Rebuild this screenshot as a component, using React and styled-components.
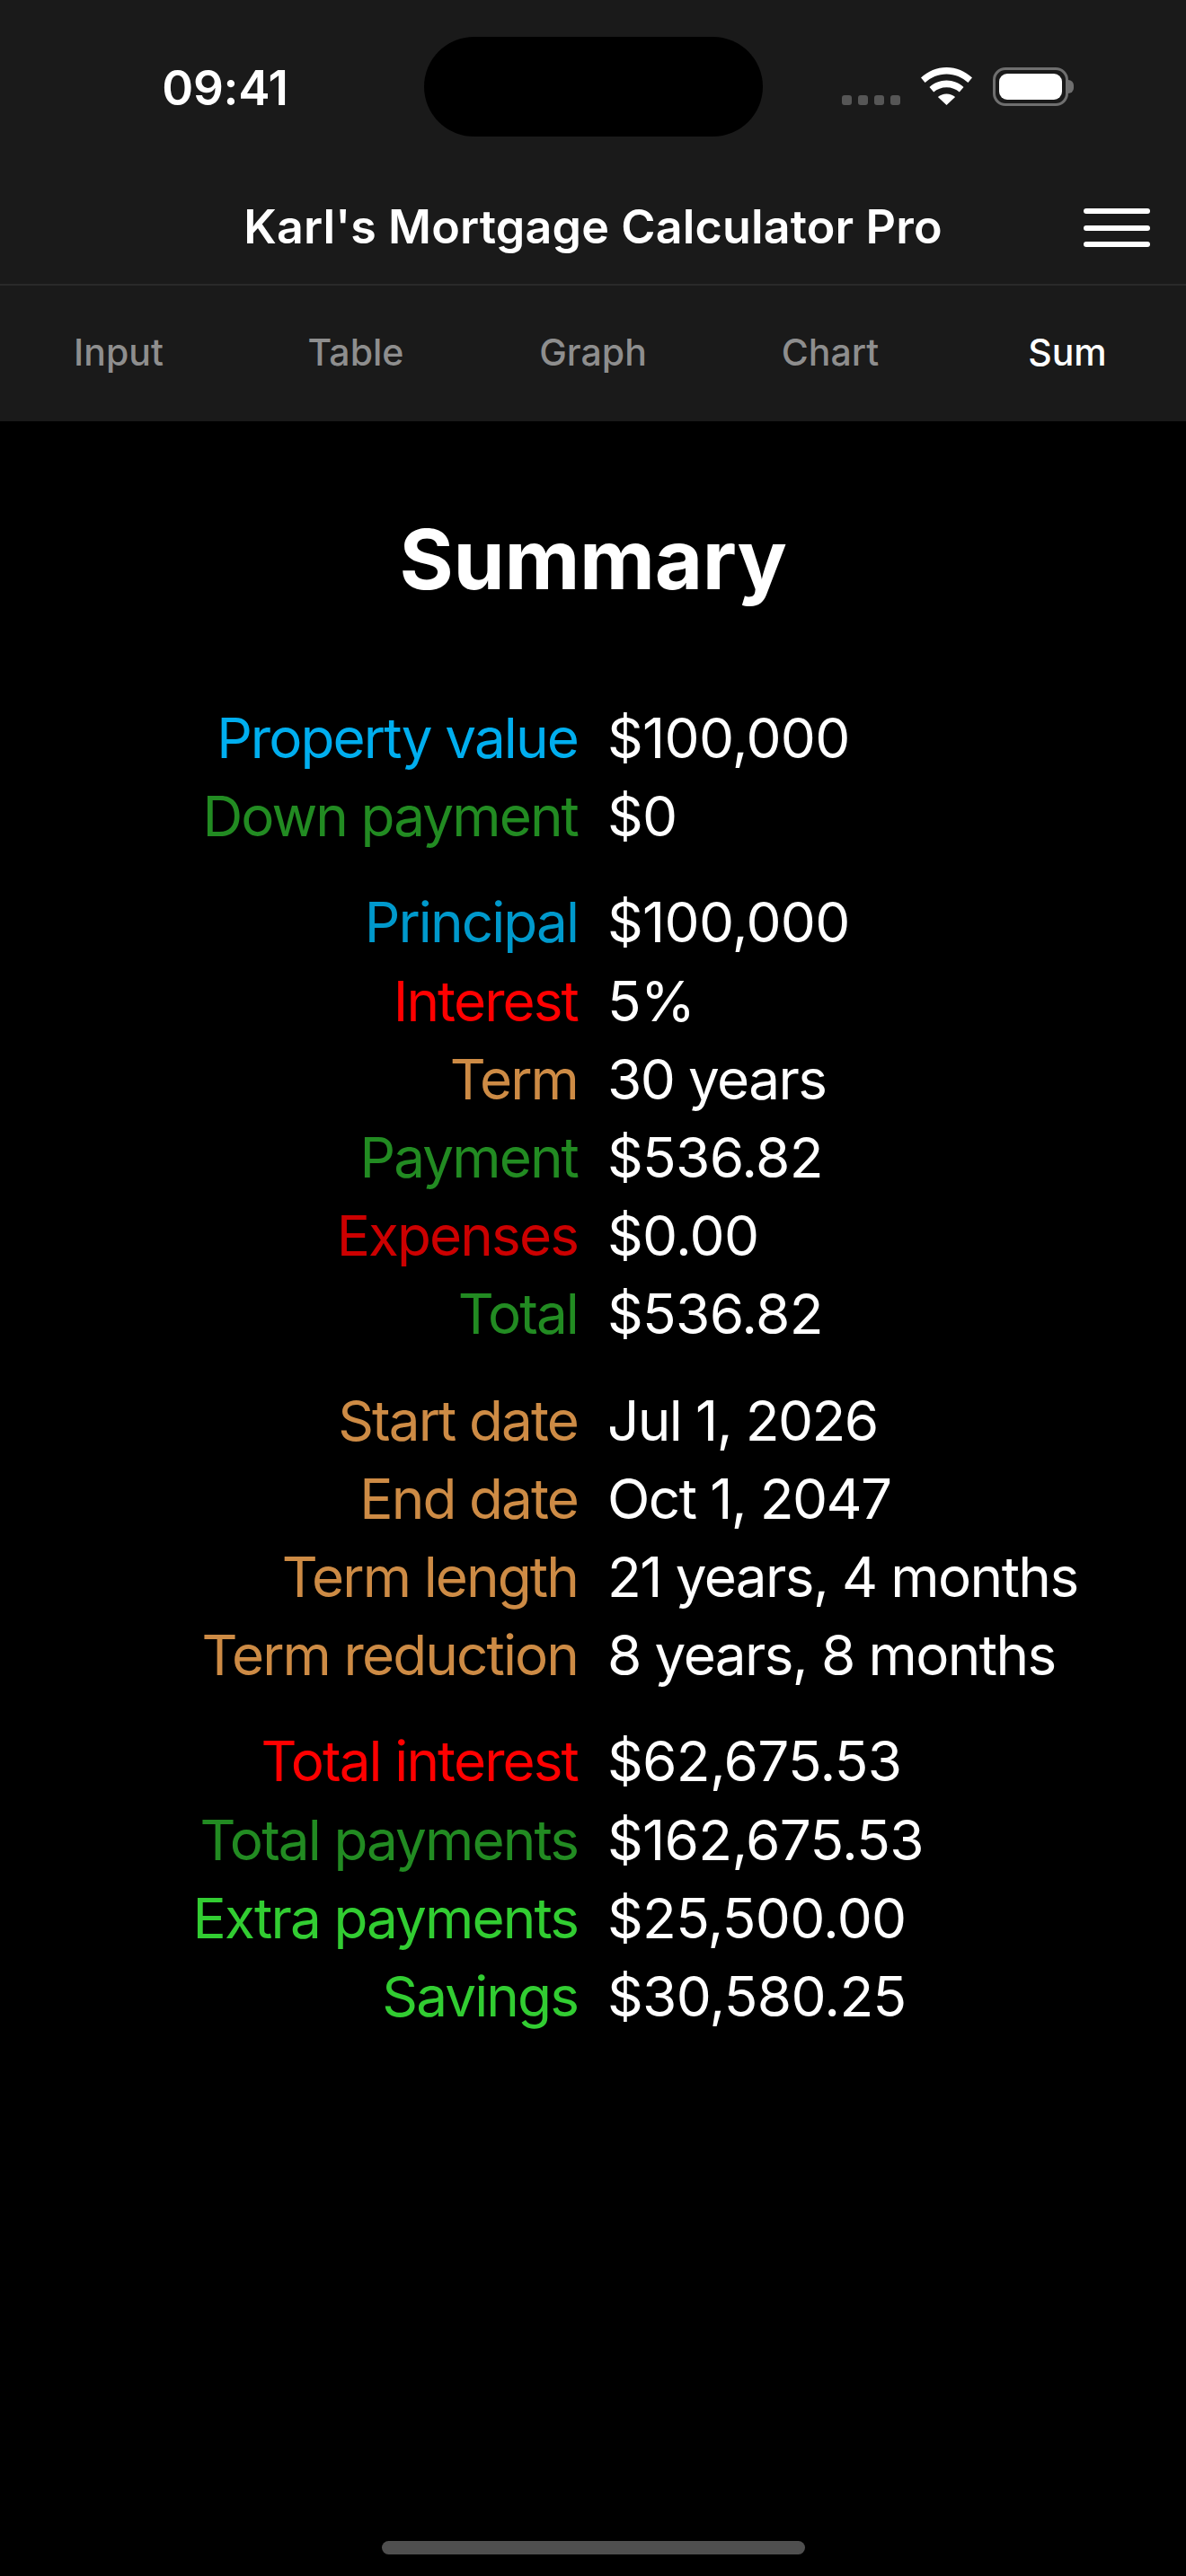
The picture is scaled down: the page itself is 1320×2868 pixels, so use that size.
import React from "react"
import styled, { createGlobalStyle } from "styled-components"

const GlobalStyle = createGlobalStyle`
  html, body {
    margin: 0;
    padding: 0;
    background: #000;
  }
  body {
    font-family: Inter, "Noto Sans", "Liberation Sans", sans-serif;
    color: #fff;
  }
`

const TABS = ["Input", "Table", "Graph", "Chart", "Sum"]

const BLUE = "#00aeef"
const TEAL = "#0099cc"
const GREEN = "#228b22"
const RED = "#ff0000"
const DARK_RED = "#cc0000"
const ORANGE = "#cd8b45"
const LIME = "#32cd32"

const GROUPS = [
  [
    ["Property value", "$100,000", BLUE],
    ["Down payment", "$0", GREEN],
  ],
  [
    ["Principal", "$100,000", TEAL],
    ["Interest", "5%", RED],
    ["Term", "30 years", ORANGE],
    ["Payment", "$536.82", GREEN],
    ["Expenses", "$0.00", DARK_RED],
    ["Total", "$536.82", GREEN],
  ],
  [
    ["Start date", "Jul 1, 2026", ORANGE],
    ["End date", "Oct 1, 2047", ORANGE],
    ["Term length", "21 years, 4 months", ORANGE],
    ["Term reduction", "8 years, 8 months", ORANGE],
  ],
  [
    ["Total interest", "$62,675.53", RED],
    ["Total payments", "$162,675.53", GREEN],
    ["Extra payments", "$25,500.00", LIME],
    ["Savings", "$30,580.25", LIME],
  ],
]

function WifiIcon() {
  return (
    <WifiSvg width="57" height="42" viewBox="0 0 57 42" fill="#fff">
      <path d="M28.5 0C17.6 0 7.8 4.3 0 11.6l4.6 5.4C11 11 19.3 7.4 28.5 7.4S46 11 52.4 17l4.6-5.4C49.2 4.3 39.4 0 28.5 0z" />
      <path d="M28.5 14.6c-7.3 0-13.8 2.8-19 7.5l4.7 5.5c3.8-3.4 8.8-5.4 14.3-5.4s10.5 2 14.3 5.4l4.7-5.5c-5.2-4.7-11.7-7.5-19-7.5z" />
      <path d="M28.5 29.5c-3.7 0-7 1.3-9.6 3.6L28.5 42l9.6-8.9c-2.6-2.3-5.9-3.6-9.6-3.6z" />
    </WifiSvg>
  )
}

function SignalDots() {
  return (
    <Dots>
      <Dot />
      <Dot />
      <Dot />
      <Dot />
    </Dots>
  )
}

function App() {
  return (
    <>
      <GlobalStyle />
      <Page>
        <Header>
          <StatusBar>
            <Time>09:41</Time>
            <Island />
            <StatusIcons>
              <SignalDots />
              <WifiIcon />
              <Battery>
                <BatteryFill />
                <BatteryNub />
              </Battery>
            </StatusIcons>
          </StatusBar>
          <TitleBar>
            <Title>Karl's Mortgage Calculator Pro</Title>
            <Burger>
              <BurgerLine />
              <BurgerLine />
              <BurgerLine />
            </Burger>
          </TitleBar>
          <Tabs>
            {TABS.map((tab) => (
              <Tab key={tab} $active={tab === "Sum"}>
                {tab}
              </Tab>
            ))}
          </Tabs>
        </Header>
        <Content>
          <Heading>Summary</Heading>
          {GROUPS.map((rows, index) => (
            <Group key={index}>
              {rows.map(([label, value, color]) => (
                <Row key={label}>
                  <Label $color={color}>{label}</Label>
                  <Value $words={/[a-z]/i.test(value)}>{value}</Value>
                </Row>
              ))}
            </Group>
          ))}
        </Content>
        <HomeBar />
      </Page>
    </>
  )
}

export default App

const Page = styled.div`
  width: 1320px;
  height: 2868px;
  background: #000;
  display: flex;
  flex-direction: column;
  overflow: hidden;
`

const Header = styled.header`
  background: #1a1a1a;
  display: flex;
  flex-direction: column;
`

const StatusBar = styled.div`
  height: 192px;
  padding-top: 41px;
  box-sizing: border-box;
  display: grid;
  grid-template-columns: 472px 377px 1fr;
  align-items: start;
`

const Time = styled.div`
  font-size: 53px;
  font-weight: 600;
  line-height: 64px;
  margin-top: 25px;
  text-align: center;
  padding-left: 29px;
  letter-spacing: -0.3px;
`

const Island = styled.div`
  height: 111px;
  background: #000;
  border-radius: 56px;
`

const StatusIcons = styled.div`
  display: flex;
  align-items: flex-end;
  padding: 34px 0 0 88px;
`

const Dots = styled.div`
  display: flex;
  gap: 7px;
  margin: 0 23px 1px 0;
`

const Dot = styled.span`
  width: 11px;
  height: 11px;
  border-radius: 3px;
  background: #565656;
`

const WifiSvg = styled.svg`
  margin-bottom: 1px;
`

const Battery = styled.div`
  position: relative;
  width: 84px;
  height: 43px;
  box-sizing: border-box;
  margin-left: 23px;
  padding: 4px;
  border: 3px solid #6f6f6f;
  border-radius: 14px;
`

const BatteryFill = styled.div`
  height: 100%;
  background: #fff;
  border-radius: 9px;
`

const BatteryNub = styled.div`
  position: absolute;
  left: 81px;
  top: 11px;
  width: 6px;
  height: 15px;
  background: #6f6f6f;
  border-radius: 0 6px 6px 0;
`

const TitleBar = styled.div`
  position: relative;
  height: 126px;
  box-sizing: border-box;
  display: flex;
  align-items: center;
  justify-content: center;
  border-bottom: 2px solid #2a2a2a;
`

const Title = styled.div`
  font-size: 52px;
  font-weight: 600;
  line-height: 64px;
  letter-spacing: 0.15px;
  margin-top: -2px;
`

const Burger = styled.div`
  position: absolute;
  right: 40px;
  top: 40px;
  width: 74px;
  display: flex;
  flex-direction: column;
  gap: 12.5px;
`

const BurgerLine = styled.span`
  height: 6px;
  border-radius: 3px;
  background: #fff;
`

const Tabs = styled.nav`
  height: 151px;
  display: grid;
  grid-template-columns: repeat(5, 1fr);
  align-items: center;
`

const Tab = styled.div`
  font-size: 41px;
  font-weight: 500;
  line-height: 48px;
  margin-top: -3px;
  text-align: center;
  color: ${(props) => (props.$active ? "#fff" : "#8e8e8e")};
`

const Content = styled.main`
  flex: 1;
  display: flex;
  flex-direction: column;
  padding-top: 100px;
`

const Heading = styled.h1`
  margin: 0 0 101px;
  font-size: 92px;
  font-weight: 700;
  line-height: 108px;
  letter-spacing: -0.3px;
  text-align: center;
`

const Group = styled.section`
  margin-bottom: 31px;
`

const Row = styled.div`
  display: grid;
  grid-template-columns: 643px 1fr;
  column-gap: 33px;
  height: 87.2px;
  align-items: center;
  font-size: 62px;
  line-height: 87px;
`

const Label = styled.span`
  text-align: right;
  white-space: nowrap;
  letter-spacing: -1.9px;
  color: ${(props) => props.$color};
`

const Value = styled.span`
  white-space: nowrap;
  letter-spacing: ${(props) => (props.$words ? "-1.6px" : "-0.7px")};
  color: #fff;
`

const HomeBar = styled.div`
  align-self: center;
  width: 471px;
  height: 15px;
  margin-bottom: 24px;
  border-radius: 8px;
  background: #4f4f4f;
`
